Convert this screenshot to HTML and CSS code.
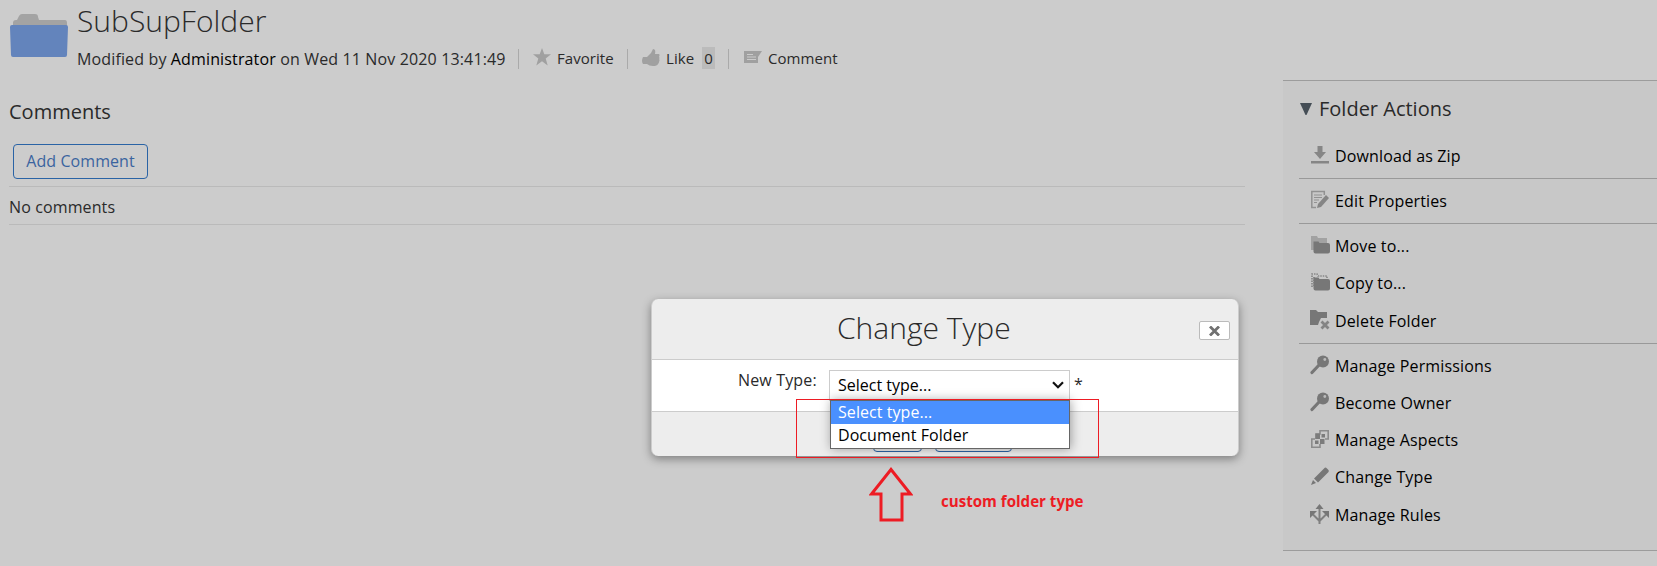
FILE: index.html
```html
<!DOCTYPE html>
<html lang="en">
<head>
<meta charset="utf-8">
<title>SubSupFolder</title>
<link rel="stylesheet" href="styles.css">
</head>
<body>
<div class="page">
  <header class="node-header">
    <svg class="folder-icon" width="58" height="44" viewBox="0 0 58 44">
      <path d="M3 12V9q0-3 3-3h1l2-4q1-2 3-2h13q3 0 3 3l1 3h26q2 0 2 3v3z" fill="#a3a3a3"/>
      <path d="M2 11h54q2 0 2 2l-1 28q0 2-2 2H3q-2 0-2-2L0 13q0-2 2-2z" fill="#6384bc"/>
    </svg>
    <div class="node-info">
      <h1 class="node-title">SubSupFolder</h1>
      <div class="node-meta">
        <span class="modified">Modified by <a class="user">Administrator</a> on Wed 11 Nov 2020 13:41:49</span>
        <span class="social fav"><svg width="18" height="18" viewBox="0 0 18 18"><path d="M9 0l2.300 6.300H18l-5.300 4.100 2 7L9 13.300 3.300 17.400l2-7L0 6.300h6.700z" fill="#a0a0a0"/></svg><span class="social-text">Favorite</span></span>
        <span class="social like"><svg width="18" height="17" viewBox="0 0 18 17"><path d="M1 8h4l4-4 2-4q3 0 2 5l4 0q1 1 0 3 1 1 0 2 1 1 0 3 0 1-1 2-1 2-5 2-4 0-6-2H1q-2-3 0-7z" fill="#a0a0a0"/></svg><span class="social-text">Like</span><b class="count">0</b></span>
        <span class="social comment"><svg width="18" height="14" viewBox="0 0 18 14"><path d="M0 1h18l-4 6v6H0z" fill="#a0a0a0"/><path d="M3 4.500h6M3 7h9M3 9.500h9" stroke="#ccc"/></svg><span class="social-text">Comment</span></span>
      </div>
    </div>
  </header>
  <div class="columns">
    <main class="comments">
      <h2 class="heading">Comments</h2>
      <a class="button add">Add Comment</a>
      <p class="empty">No comments</p>
    </main>
    <aside class="actions">
      <h2 class="actions-title"><svg width="12" height="12" viewBox="0 0 12 12"><path d="M0 0h12L6.500 12h-1z" fill="#454e56"/></svg>Folder Actions</h2>
      <div class="group">
        <a class="action"><svg viewBox="0 0 20 20"><path d="M7.500 1h5v6H16l-6 7-6-7h3.500z" fill="#868686"/><path d="M1 16h18v2.500H1z" fill="#868686"/></svg>Download as Zip</a>
      </div>
      <div class="group">
        <a class="action"><svg viewBox="0 0 20 20"><path d="M6 17.500H1.800v-16h12.500V5" fill="none" stroke="#929292" stroke-width="1.500"/><path d="M4 5h8M4 7.500h8M4 10h5M4 12.500h3" stroke="#929292"/><path d="M7 18l1-4 8-9 3 3-8 9z" fill="#858585"/></svg>Edit Properties</a>
      </div>
      <div class="group">
        <a class="action"><svg viewBox="0 0 20 20"><path d="M1 15V1h6l1 2h9v5H5v7z" fill="#a2a2a2"/><path d="M3.500 6.500h5l1 1.500H18q2 0 2 2v6.500q0 2-2 2H5.500q-2 0-2-2z" fill="#777"/></svg>Move to...</a>
        <a class="action"><svg viewBox="0 0 20 20"><path d="M2 15V2h5l1 2h9v2M4 14V4" fill="none" stroke="#888" stroke-width="1.700" stroke-dasharray="1.500 1"/><path d="M3.500 5.500h5l1 1.500H18q2 0 2 2v7.500q0 2-2 2H5.500q-2 0-2-2z" fill="#777"/></svg>Copy to...</a>
        <a class="action"><svg viewBox="0 0 20 20"><path d="M0 0h6l2 2h9v6h-6l-2 4-1 3H0z" fill="#777"/><path d="M11.500 11.500l7 7m0-7l-7 7" stroke="#858585" stroke-width="2.800"/></svg>Delete Folder</a>
      </div>
      <div class="group">
        <a class="action"><svg viewBox="0 0 20 20"><path d="M2 17.500L10 9" stroke="#777" stroke-width="3.200" stroke-linecap="round"/><circle cx="13" cy="6.500" r="6" fill="#777"/><circle cx="14.800" cy="4.500" r="1.400" fill="#bbb"/></svg>Manage Permissions</a>
        <a class="action"><svg viewBox="0 0 20 20"><path d="M2 17.500L10 9" stroke="#777" stroke-width="3.200" stroke-linecap="round"/><circle cx="13" cy="6.500" r="6" fill="#777"/><circle cx="14.800" cy="4.500" r="1.400" fill="#bbb"/></svg>Become Owner</a>
        <a class="action"><svg viewBox="0 0 20 20"><path d="M6 10V5h4V1.800h8.200V10H15M5 10H1.800v8.200H10V15" fill="none" stroke="#8b8b8b" stroke-width="1.600"/><path d="M5.500 4.500H10V10H5.500zM10 10h4.500v5H10zM11.500 5h3.500v3.500h-3.500zM5 11.500h3.500V15H5z" fill="#7c7c7c"/></svg>Manage Aspects</a>
        <a class="action"><svg viewBox="0 0 20 20"><path d="M1 19l2-5 3 3zM4 12.500L14.500 2q1-1 2.500.5l1 1q1.500 1 .5 2.500L8 16.500z" fill="#777"/></svg>Change Type</a>
        <a class="action"><svg viewBox="0 0 20 20"><path d="M9.500 4v16M9.500 17L3 10.500M9.500 17l6.500-6.500" fill="none" stroke="#808080" stroke-width="2"/><path d="M5.500 5l4-5 4 5zM0 7h7l-7 7zM19 7h-7l7 7z" fill="#777"/></svg>Manage Rules</a>
      </div>
    </aside>
  </div>
</div>

<section class="dialog">
  <div class="dialog-head">
    <h2 class="dialog-title">Change Type</h2>
    <span class="close"><svg width="11" height="10" viewBox="0 0 11 10"><path d="M1 .5l9 9m0-9l-9 9" stroke="#707070" stroke-width="2.800"/></svg></span>
  </div>
  <div class="dialog-body">
    <label class="label">New Type:</label>
    <div class="select">Select type...<svg width="12" height="8" viewBox="0 0 12 8"><path d="M1 1.200l5 5 5-5" fill="none" stroke="#111" stroke-width="2.200"/></svg>
      <div class="options">
        <div class="option selected">Select type...</div>
        <div class="option">Document Folder</div>
      </div>
    </div>
    <span class="required">*</span>
  </div>
  <div class="dialog-foot"><span class="button ok"></span><span class="button cancel"></span></div>
</section>

<div class="highlight"></div>
<svg class="arrow" width="44" height="55" viewBox="0 0 44 55"><path d="M22 2.500L2.500 27H12v26h21V27h8.500z" fill="none" stroke="#ed1c24" stroke-width="3"/></svg>
<div class="note">custom folder type</div>
</body>
</html>
```

FILE: styles.css
```css
* { box-sizing: border-box; }
body {
  margin: 0;
  height: 566px;
  overflow: hidden;
  background: #ccc;
  color: #2a2a2a;
  font: 16px/22px "Open Sans", sans-serif;
}
h1, h2, p { margin: 0; font-weight: 400; }
svg { display: block; flex: none; }
.node-header { display: flex; height: 80px; padding-left: 10px; }
.folder-icon { margin-top: 14px; }
.node-info { padding-left: 9px; }
.node-title { font-size: 30px; font-weight: 300; line-height: 42px; }
.node-meta { display: flex; align-items: center; height: 34px; }
.modified { width: 441px; white-space: nowrap; letter-spacing: .14px; }
.user { color: #000; }
.social {
  display: flex;
  align-items: center;
  height: 20px;
  padding-left: 15px;
  border-left: 1px solid #aaa;
  font-size: 15px;
  line-height: 20px;
}
.social svg { margin: -4px 6px 0 -1px; }
.social-text { margin-top: -2px; letter-spacing: .05px; }
.fav { width: 109px; }
.like { width: 101px; }
.comment svg { margin-left: 0; }
.count { margin: -2px 0 0 8px; width: 13px; height: 22px; background: #bbb; font-weight: 400; text-align: center; line-height: 22px; }
.columns { display: flex; }
.comments { flex: none; width: 1245px; padding: 18px 0 0 9px; margin-right: 38px; }
.heading { font-size: 20px; line-height: 28px; margin-bottom: 18px; }
.button { display: inline-block; border: 1px solid #2a63a5; border-radius: 4px; }
.add {
  display: block;
  width: 135px;
  height: 35px;
  margin-left: 4px;
  color: #3b649f;
  line-height: 33px;
  text-align: center;
  letter-spacing: .08px;
}
.empty {
  height: 39px;
  margin-top: 7px;
  border: solid #bababa;
  border-width: 1px 0;
  line-height: 41px;
  letter-spacing: .12px;
}
.actions {
  width: 374px;
  height: 471px;
  padding: 14px 0 0 16px;
  border: solid #9c9c9c;
  border-width: 1px 0;
  background: #c8c8c8;
  color: #000;
}
.actions-title { display: flex; align-items: center; font-size: 20px; line-height: 28px; color: #2a2a2a; padding-left: 1px; margin-bottom: 11px; }
.actions-title svg { margin-right: 7px; }
.group { padding: 3.350px 0; border-bottom: 1px solid #999; }
.group:last-child { border: 0; }
.action { display: flex; align-items: center; height: 37.300px; padding-left: 11px; letter-spacing: .14px; }
.action svg { width: 20px; height: 20px; margin: -2px 5px 0 0; }
.dialog {
  position: absolute;
  left: 651px;
  top: 299px;
  width: 588px;
  height: 157px;
  border: solid #ccc;
  border-width: 0 1px;
  border-radius: 7px;
  background: #ededed;
  box-shadow: 0 3px 10px rgba(0, 0, 0, .38);
}
.dialog-head { display: flex; height: 61px; padding-left: 185px; border-bottom: 1px solid #ccc; }
.dialog-title { flex: 1; font-size: 30px; font-weight: 300; line-height: 58px; }
.close {
  display: grid;
  place-items: center;
  width: 31px;
  height: 19px;
  margin: 22px 8px 0 0;
  border: 1px solid #bbb;
  border-radius: 2px;
  background: #fff;
}
.dialog-body { display: flex; height: 52px; background: #fff; border-bottom: 1px solid #ccc; }
.label { width: 177px; padding-top: 9px; padding-left: 86px; white-space: nowrap; letter-spacing: .15px; }
.select {
  position: relative;
  display: flex;
  justify-content: space-between;
  align-items: center;
  width: 241px;
  height: 31px;
  margin-top: 10px;
  padding: 0 5px 2px 8px;
  border: 1px solid #ccc;
  color: #000;
}
.options {
  position: absolute;
  left: 0;
  top: 29px;
  width: 240px;
  height: 49px;
  border: 1px solid #666;
  background: #fff;
  box-shadow: 1px 0 10px rgba(0, 0, 0, .35);
}
.option { height: 24px; padding-left: 7px; line-height: 22px; letter-spacing: .06px; }
.selected { height: 23px; background: #4a90fe; color: #fff; line-height: 23px; }
.required { padding: 13px 0 0 4px; }
.dialog-foot { display: flex; gap: 13px; height: 44px; padding: 5px 0 0 221px; }
.ok { width: 49px; height: 35px; }
.cancel { width: 77px; height: 35px; }
.highlight { position: absolute; left: 796px; top: 399px; width: 303px; height: 59px; border: 1px solid #ed1c24; }
.arrow { position: absolute; left: 869px; top: 467px; }
.note { position: absolute; left: 941px; top: 490px; color: #ed1c24; font: 700 15.100px/22px "Open Sans", sans-serif; white-space: nowrap; }
```
